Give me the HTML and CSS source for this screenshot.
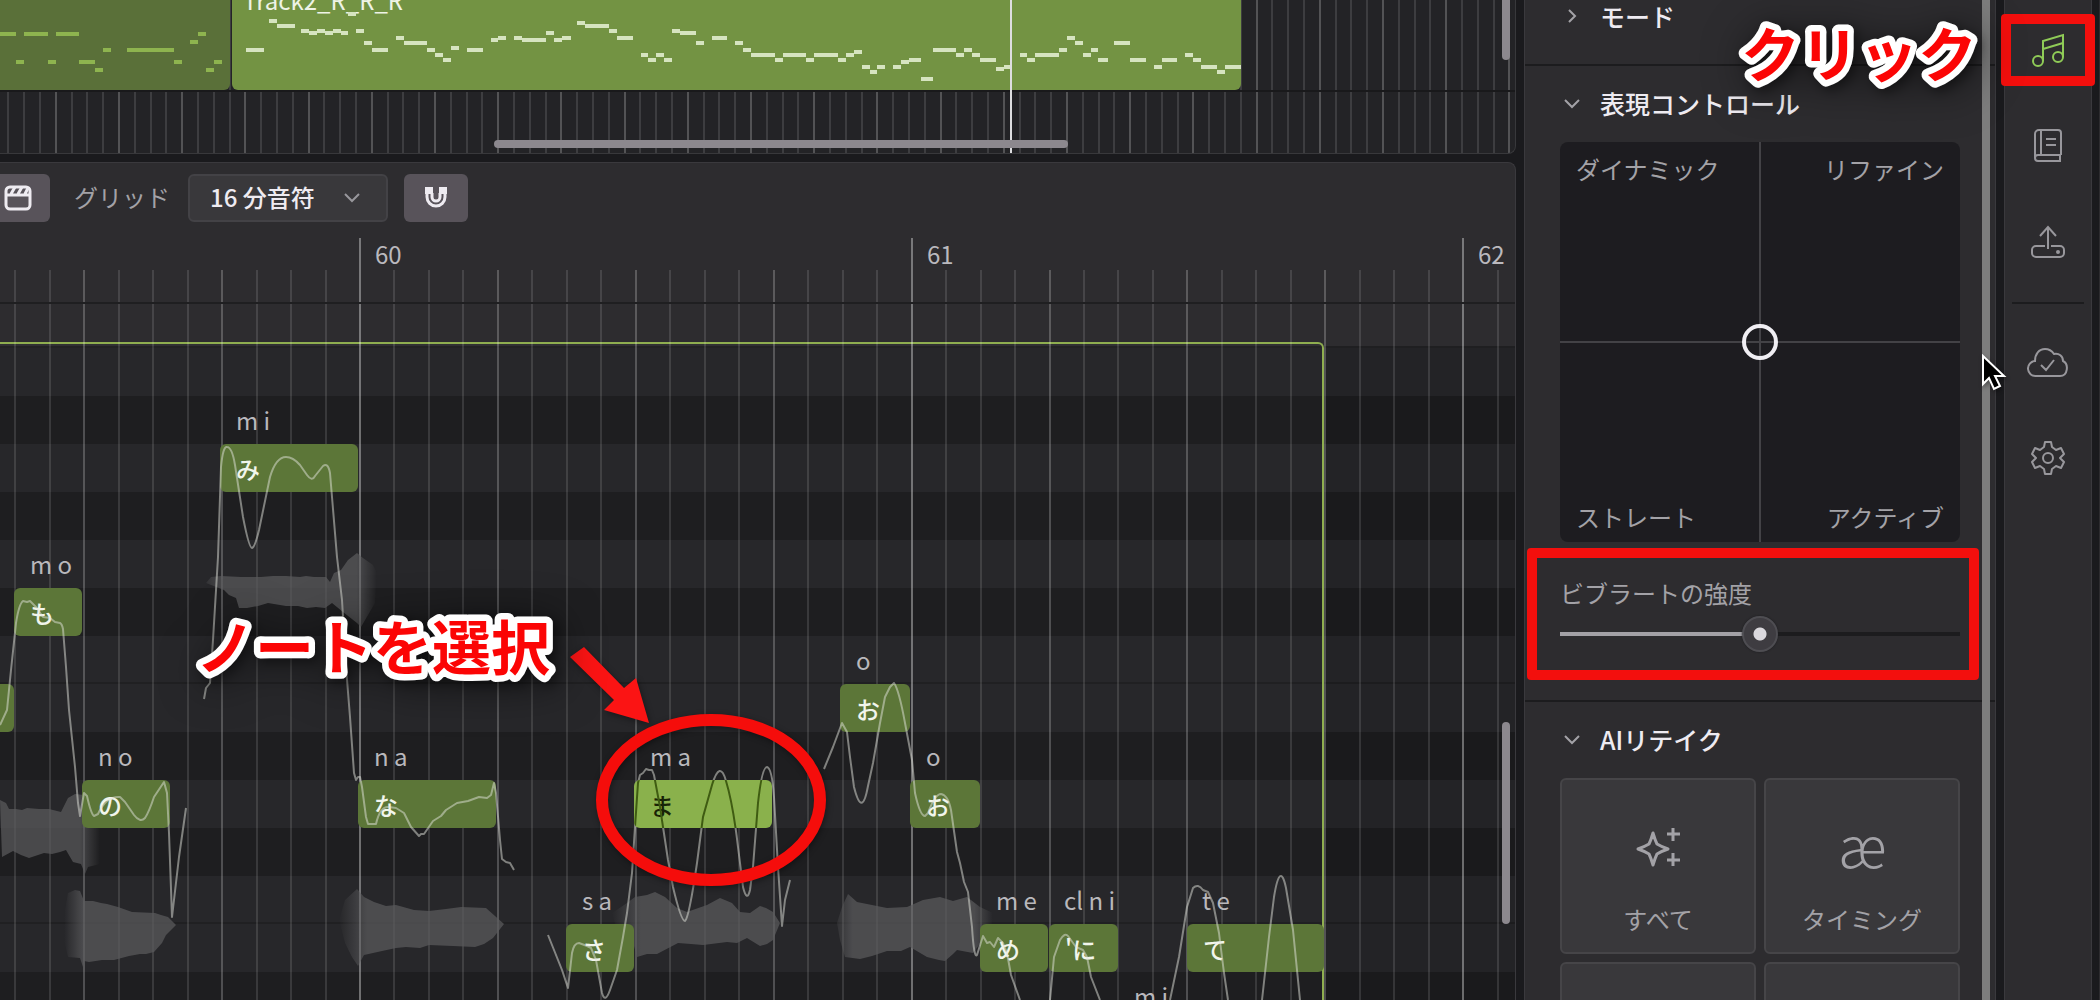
FILE: index.html
```html
<!DOCTYPE html>
<html lang="ja">
<head>
    <meta charset="UTF-8">
    <title>Piano roll</title>
    <link rel="stylesheet" href="styles.css">
</head>
<body>
<div class="app">
    <main class="workspace">
        <section class="tracks">
            <svg id="trackGrid" class="grid-lines"></svg>
            <div class="lane-line"></div>
            <div class="clip clip-dim">
                <svg class="clip-notes" width="230" height="90">
                    <path d="M0 34h16M24 34h24M56 34h23M16 62h8M48 62h8M79 62h16M95 70h8M103 50h8M127 50h47M174 62h8M190 42h8M198 34h8M206 70h8M214 62h8"/>
                </svg>
            </div>
            <div class="clip clip-active">
                <span class="clip-title">Track2_R_R_R</span>
                <svg class="clip-notes" width="1009" height="90" viewBox="232 0 1009 90">
                    <path d="M246 50h18M269 21h8M277 26h18M301 31h8M309 33h8M317 31h8M325 33h8M333 31h8M341 33h7M348 14h8M356 31h8M364 43h8M372 50h16M396 38h8M404 43h23M427 50h8M435 55h8M443 60h8M451 48h8M467 50h16M491 40h7M498 38h8M514 38h8M522 40h24M546 33h8M554 40h8M562 38h9M577 23h8M585 26h24M609 31h8M617 38h16M641 55h7M648 60h8M656 55h8M664 60h8M672 31h8M680 33h16M696 43h8M712 38h15M735 43h8M743 50h8M751 55h24M775 60h8M783 55h23M806 60h8M814 55h24M838 60h8M846 55h8M854 52h8M862 67h8M870 72h7M877 67h8M893 67h8M901 62h8M909 60h12M921 79h12M933 50h23M956 55h8M964 50h8M972 55h8M980 60h16M996 69h8M1004 67h7M1020 55h7M1027 60h8M1035 55h24M1059 50h8M1067 38h8M1075 43h8M1083 55h8M1091 50h7M1098 60h10M1114 43h16M1130 60h16M1154 67h8M1162 60h15M1185 55h8M1193 60h8M1201 67h16M1217 72h8M1225 67h16"/>
                </svg>
            </div>
            <div class="playhead"></div>
            <div class="scroll-x"></div>
            <div class="scroll-y"></div>
        </section>

        <section class="editor">
            <div class="toolbar">
                <button class="tool-button tool-clip" aria-label="クリップ">
                    <svg width="28" height="28" viewBox="0 0 28 28" fill="none" stroke="currentColor" stroke-width="3">
                        <rect x="2" y="3" width="24" height="22" rx="4"/>
                        <path d="M2 11h24M7 10l4-7M14 10l4-7M21 10l3-6"/>
                    </svg>
                </button>
                <label class="tool-label" for="gridSize">グリッド</label>
                <div class="select-box">
                    <select id="gridSize">
                        <option>16 分音符</option>
                    </select>
                    <svg class="select-arrow" width="16" height="10" viewBox="0 0 16 10" fill="none" stroke="currentColor" stroke-width="2">
                        <path d="M1 1l7 7 7-7"/>
                    </svg>
                </div>
                <button class="tool-button" aria-label="スナップ">
                    <svg width="24" height="24" viewBox="0 0 24 24" fill="none" stroke="currentColor">
                        <path stroke-width="8" d="M5 1v7M19 1v7"/>
                        <path stroke-width="3" d="M3 1v10a9 9 0 0 0 18 0V1M8 7v4a4 4 0 0 0 8 0V7"/>
                    </svg>
                </button>
            </div>

            <div class="ruler">
                <svg id="rulerGrid" class="grid-lines"></svg>
                <span class="bar-number" style="left: 375px">60</span>
                <span class="bar-number" style="left: 927px">61</span>
                <span class="bar-number" style="left: 1478px">62</span>
            </div>

            <div class="roll">
                <div class="roll-strip"></div>
                <div class="row"></div>
                <div class="row black"></div>
                <div class="row"></div>
                <div class="row black"></div>
                <div class="row"></div>
                <div class="row black"></div>
                <div class="row split"></div>
                <div class="row"></div>
                <div class="row black"></div>
                <div class="row"></div>
                <div class="row black"></div>
                <div class="row split"></div>
                <div class="row"></div>
                <div class="row black"></div>
                <div class="region"></div>

                <!-- rendered audio of each phrase -->
                <svg class="layer waves" width="1516" height="696" viewBox="0 304 1516 696">
                    <defs>
                        <linearGradient id="fadeOut"><stop offset=".8" stop-color="#5c5c5e"/><stop offset="1" stop-color="#5c5c5e" stop-opacity="0"/></linearGradient>
                        <linearGradient id="fadeIn"><stop offset="0" stop-color="#5c5c5e" stop-opacity="0"/><stop offset=".17" stop-color="#5c5c5e"/></linearGradient>
                        <linearGradient id="fadeBoth"><stop offset="0" stop-color="#5c5c5e" stop-opacity=".3"/><stop offset=".1" stop-color="#5c5c5e"/><stop offset=".88" stop-color="#5c5c5e"/><stop offset="1" stop-color="#5c5c5e" stop-opacity="0"/></linearGradient>
                    </defs>
                    <path fill="url(#fadeOut)" d="M0 800l6 3 3 6 7 0 6 1 5-2 12 1 10 0 12 3 7-14 7-4 9 1 16 6v63l-12 3-3 7-4-10-8-2-7-12-6 2-8 2-8-1-15 5-8-3-8-4-11 6z"/>
                    <path fill="url(#fadeIn)" d="M64 915l4-22 7-3 5 1 4 10 9 0 8 2 6 1 11 3 14 5 23 1 6 2 7 2 8 8-10 10-4 8-8 9-8 2-6 0-11 2-15 4-12 0-13 2-5-1-1 6-3-9-12-1-4-17z"/>
                    <path fill="url(#fadeBoth)" d="M206 583l5-6 10-1 20 1 20 0 12-1 13 0 14 1 6-1 8 1 12 0 4 5 4-9 7-3 7-10 9-7 6 5 10 7 4 8-2 30-7 12-7 12-4-4-14-11-11-9-7 5-9-1-9 1-9-2-12 0-18-3-10 3-11 2-8 0-3-10-7-3-5-5z"/>
                    <path fill="url(#fadeIn)" d="M339 920l6-20 12-11 7 8 10 5 12 4 10-1 18 5 15 1 17-2 15-2 25 1 18 16-11 14-9 6-9 3-22-1-24-1-9 3-14-1-10 1-14 3-18 4-6 11-6-9-7-14z"/>
                    <path fill="url(#fadeIn)" d="M612 913l15-10 8-6 12-2 8-3 10 5 12 11 10 4 20-7 13-7 12 5 8 9 10 1 10-7 6 2 7 4 7 11-7 17-6 4-7 2-13-8-10 5-10-1-24 3-12-1-13-1-21 11-10 0-10 3-3-11-18-18z"/>
                    <path fill="url(#fadeBoth)" d="M837 923l5-16 6-13 9 8 20 4 10 2 20-1 16-7 17-3 13 4 14-4 13 10 13 6-1 15-19 25-16-3-4 4-8 7-6-1-12-3-17-10-9 4-14 0-15 5-12 3-15-2-5-17z"/>
                </svg>

                <div class="phoneme" style="left: 30px; top: 250px">m o</div>
                <div class="note" style="left: 14px; top: 284px; width: 68px">も</div>
                <div class="note" style="left: -54px; top: 380px; width: 68px"></div>
                <div class="phoneme" style="left: 98px; top: 442px">n o</div>
                <div class="note" style="left: 82px; top: 476px; width: 88px">の</div>
                <div class="phoneme" style="left: 236px; top: 106px">m i</div>
                <div class="note" style="left: 220px; top: 140px; width: 138px">み</div>
                <div class="phoneme" style="left: 374px; top: 442px">n a</div>
                <div class="note" style="left: 358px; top: 476px; width: 138px">な</div>
                <div class="phoneme" style="left: 582px; top: 586px">s a</div>
                <div class="note" style="left: 566px; top: 620px; width: 68px">さ</div>
                <div class="phoneme" style="left: 650px; top: 442px">m a</div>
                <div class="phoneme" style="left: 856px; top: 346px">o</div>
                <div class="note" style="left: 840px; top: 380px; width: 70px">お</div>
                <div class="phoneme" style="left: 926px; top: 442px">o</div>
                <div class="note" style="left: 910px; top: 476px; width: 70px">お</div>
                <div class="phoneme" style="left: 996px; top: 586px">m e</div>
                <div class="note" style="left: 980px; top: 620px; width: 68px">め</div>
                <div class="phoneme" style="left: 1064px; top: 586px">cl n i</div>
                <div class="note" style="left: 1049px; top: 620px; width: 69px">'に</div>
                <div class="phoneme" style="left: 1134px; top: 682px">m i</div>
                <div class="phoneme" style="left: 1202px; top: 586px">t e</div>
                <div class="note" style="left: 1187px; top: 620px; width: 137px">て</div>

                <!-- pitch curves -->
                <svg class="layer pitch" width="1516" height="696" viewBox="0 304 1516 696">
                    <path d="M0 725L7 710 11 670 16 623Q19 604 23 601L27 602 30 601 36 607 43 617 50 618 55 622 60 623Q62 624 63 629L66 667 69 710 75 767 78 803 80 816 84 793 87 796Q91 814 94 816L98 814Q106 796 120 797L125 802 134 815Q140 823 145 818 149 812 154 797L164 782 167 793 169 833 172 917 179 857 186 808"/>
                    <path d="M204 699L206 688 210 683 213 640 218 557 221 467Q223 446 227 447 232 447 235 465L243 517Q249 548 252 548 255 547 259 530L270 477Q276 457 286 457 293 457 300 465L307 475Q312 482 315 476L323 466Q328 462 330 473L337 557 342 600 346 667 350 717 354 773 356 780 358 777 360 777 362 787 366 817 368 824 376 824Q380 806 389 807L396 808 404 813 411 827 419 836 421 834 424 834 433 821 441 816 446 810 457 803 468 801 479 797 487 798 491 795 494 783 496 793 500 840 502 859 506 862 510 863 514 870"/>
                    <path d="M548 935L562 970 568 988 572 953Q574 943 579 943L587 946 591 948 596 960 602 993Q605 1004 610 990L617 970 623 937 627 913 632 873 635 827 638 783 640 775 643 773 646 769 649 770 652 770 654 775 660 807 668 860 673 887Q681 921 685 921 689 918 697 863L703 817 712 785Q720 759 726 781 733 804 738 847L743 887Q747 903 750 890L753 867 758 803Q762 767 767 767 772 768 774 797L778 867 782 926 785 900 790 880"/>
                    <path d="M824 769L833 747 842 723 847 732 850 757 854 787Q862 819 868 786L873 763 880 723 885 697 890 687 894 683Q899 690 905 723L912 760 915 793Q920 816 925 816L928 813Q935 794 941 794 948 795 951 810L957 852 960 863 964 882 968 892 972 927Q974 959 977 955L983 936 987 943 990 942 994 947 998 938 1003 943 1007 953 1011 975 1020 1000"/>
                    <path d="M1050 1000L1054 957 1060 940Q1065 932 1068 936L1076 947 1083 950 1087 957 1091 977 1100 1000M1170 1000L1179 957 1187 907 1193 888Q1198 883 1203 890L1208 892 1213 903 1219 933 1224 973 1228 1000M1262 1000L1269 937 1274 897Q1280 860 1286 888L1293 930 1300 1000"/>
                </svg>

                <div class="note selected" style="left: 634px; top: 476px; width: 138px">
                    <svg class="note-pitch" width="138" height="48" viewBox="634 780 138 48">
                        <path d="M632 873L635 827 638 783 640 775M654 775L660 807 668 860M697 863L703 817 712 785Q720 759 726 781 733 804 738 847M753 867L758 803Q762 767 767 767 772 768 774 797"/>
                    </svg>
                    <span>ま</span>
                </div>

                <svg class="layer marks" width="1516" height="696" viewBox="0 304 1516 696">
                    <path fill="#fb1414" d="M570 657L584 647 624 688 636 678 649 723 604 710 614 700z"/>
                    <ellipse cx="711" cy="800" rx="109" ry="80" fill="none" stroke="#f50d0b" stroke-width="12"/>
                </svg>
                <svg class="caption caption-note" width="400" height="100">
                    <text x="16" y="66">ノートを選択</text>
                </svg>
                <div class="scroll-y scroll-roll"></div>
            </div>
        </section>
    </main>

    <aside class="inspector">
        <section class="group group-mode">
            <h2>
                <svg width="16" height="16" viewBox="0 0 16 16" fill="none" stroke="currentColor" stroke-width="2"><path d="M5 2l6 6-6 6"/></svg>
                モード
            </h2>
        </section>
        <section class="group group-control">
            <h2>
                <svg width="16" height="16" viewBox="0 0 16 16" fill="none" stroke="currentColor" stroke-width="2"><path d="M1 5l7 7 7-7"/></svg>
                表現コントロール
            </h2>
            <div class="pad">
                <span>ダイナミック</span>
                <span>リファイン</span>
                <span>ストレート</span>
                <span>アクティブ</span>
                <button class="pad-handle" aria-label="表現"></button>
            </div>
            <div class="vibrato">
                <label for="vibrato">ビブラートの強度</label>
                <input id="vibrato" type="range" min="0" max="100" value="50">
                <div class="red-box"></div>
            </div>
        </section>
        <section class="group group-retake">
            <h2>
                <svg width="16" height="16" viewBox="0 0 16 16" fill="none" stroke="currentColor" stroke-width="2"><path d="M1 5l7 7 7-7"/></svg>
                AIリテイク
            </h2>
            <div class="cards">
                <button class="card">
                    <svg width="46" height="46" viewBox="0 0 46 46" fill="none" stroke="currentColor" stroke-width="3">
                        <path stroke-linejoin="round" d="M18 7q2 7 4 11 5 3 11 5-6 2-11 5-2 4-4 11-2-7-4-11-5-3-11-5 6-2 11-5 2-4 4-11z"/>
                        <path d="M38 2v13M32 8h13M38 27v13M32 34h13"/>
                    </svg>
                    <span>すべて</span>
                </button>
                <button class="card">
                    <span class="glyph">æ</span>
                    <span>タイミング</span>
                </button>
                <button class="card" aria-label="ピッチ"></button>
                <button class="card" aria-label="音色"></button>
            </div>
        </section>
        <div class="inspector-scroll"></div>
    </aside>

    <nav class="sidebar">
        <button class="side-button active" aria-label="ノート">
            <svg width="36" height="36" viewBox="0 0 36 36">
                <circle cx="8" cy="29" r="5"/><circle cx="28" cy="25" r="5"/>
                <path d="M13 29V9l20-6v22M13 17l20-6"/>
            </svg>
            <div class="red-box"></div>
        </button>
        <button class="side-button" aria-label="辞書">
            <svg width="36" height="36" viewBox="0 0 36 36">
                <path d="M31 27H8a3 3 0 0 0 0 6h23M30 27v6M5 30V6a4 4 0 0 1 4-4h19a3 3 0 0 1 3 3v22M11 2v25M16 11h10M16 17h10"/>
            </svg>
        </button>
        <button class="side-button" aria-label="書き出し">
            <svg width="36" height="36" viewBox="0 0 36 36">
                <path d="M18 25V3M10 12l8-9 8 9M15 22H6a4 4 0 0 0-4 4v3a4 4 0 0 0 4 4h24a4 4 0 0 0 4-4v-3a4 4 0 0 0-4-4h-9"/>
                <circle class="dot" cx="28" cy="28" r="1"/>
            </svg>
        </button>
        <div class="side-line"></div>
        <button class="side-button" aria-label="クラウド">
            <svg width="42" height="36" viewBox="0 0 42 36">
                <path d="M9 32a7 7 0 0 1-1-15C8 10 12 5 18 5c4 0 7 2 9 5 5-1 9 2 9 7 6 3 5 15-3 15zM14 21l5 5 8-10"/>
            </svg>
        </button>
        <button class="side-button" aria-label="設定">
            <svg width="36" height="36" viewBox="0 0 36 36">
                <circle cx="18" cy="18" r="5"/>
                <path stroke-linejoin="round" d="M15 2h6l1 5 4 3 5-2 3 6-4 4 4 4-3 6-5-2-4 3-1 5h-6l-1-5-4-3-5 2-3-6 4-4-4-4 3-6 5 2 4-3z"/>
            </svg>
        </button>
    </nav>

    <svg class="caption caption-click" width="260" height="110">
        <text x="11" y="77">クリック</text>
    </svg>
    <svg class="cursor" width="26" height="38" viewBox="0 0 26 38">
        <path fill="#000" stroke="#fff" stroke-width="2" d="M2 2v28l6-6 5 11 6-3-5-10h9z"/>
    </svg>
</div>
<script src="script.js"></script>
</body>
</html>
```
FILE: styles.css
```css
* {
    box-sizing: border-box;
}

body {
    margin: 0;
    background-color: #1a1a1d;
    color: #a3a2a7;
    font-family: "Noto Sans CJK JP", "Noto Sans", sans-serif;
    font-size: 24px;
    line-height: 36px;
}

button, select {
    font: inherit;
    color: inherit;
    border: none;
    padding: 0;
}

.app {
    position: relative;
    display: grid;
    grid-template-columns: minmax(0, 1fr) 472px 88px;
    column-gap: 8px;
    height: 100vh;
    padding-right: 7px;
    border-right: 1px solid #2d2c2f;
    overflow: hidden;
}

/* left side: tracks and piano roll */
.workspace {
    display: flex;
    flex-direction: column;
    gap: 8px;
    min-width: 0;
    min-height: 0;
}

.tracks {
    position: relative;
    height: 154px;
    background-color: #232326;
    border-bottom: 1px solid #38383b;
    border-right: 1px solid #38383b;
    border-radius: 0 0 8px 0;
    overflow: hidden;
}

.grid-lines {
    position: absolute;
    left: 0;
    top: 0;
    width: 100%;
    height: 100%;
}

.grid-lines path {
    fill: none;
    stroke-width: 2px;
}

.grid-lines .minor {
    stroke: rgba(255, 255, 255, 0.12);
}

.grid-lines .beat {
    stroke: rgba(255, 255, 255, 0.22);
}

.grid-lines .bar {
    stroke: rgba(255, 255, 255, 0.36);
}

.lane-line {
    position: absolute;
    left: 0;
    right: 0;
    top: 90px;
    height: 2px;
    background-color: #19191b;
}

.clip {
    position: absolute;
    top: 0;
    height: 90px;
    overflow: hidden;
}

.clip-dim {
    left: 0;
    width: 230px;
    background-color: #5a7039;
    border-radius: 0 0 6px 0;
}

.clip-active {
    left: 232px;
    width: 1009px;
    background-color: #739343;
    border-radius: 0 0 6px 6px;
}

.clip-notes {
    position: absolute;
    left: 0;
    top: 0;
    fill: none;
    stroke: #8eb44f;
    stroke-width: 4px;
}

.clip-active .clip-notes {
    stroke: #d6e4c0;
}

.clip-title {
    position: absolute;
    left: 11px;
    top: -18px;
    color: #eef3e6;
}

.playhead {
    position: absolute;
    left: 1010px;
    top: 0;
    width: 2px;
    height: 100%;
    background-color: #dddde0;
}

.scroll-x {
    position: absolute;
    left: 494px;
    top: 140px;
    width: 574px;
    height: 8px;
    border-radius: 4px;
    background-color: #8c888e;
}

.scroll-y {
    position: absolute;
    right: 5px;
    top: -8px;
    width: 8px;
    height: 68px;
    border-radius: 4px;
    background-color: #8c888e;
}

.editor {
    flex: 1;
    display: flex;
    flex-direction: column;
    min-height: 0;
    background-color: #2d2c2f;
    border-top: 1px solid #3a393d;
    border-right: 1px solid #3a393d;
    border-radius: 0 8px 0 0;
    overflow: hidden;
}

.toolbar {
    display: flex;
    align-items: center;
    height: 75px;
    padding-bottom: 5px;
}

.tool-button {
    display: flex;
    align-items: center;
    justify-content: center;
    width: 64px;
    height: 48px;
    border-radius: 6px;
    background-color: #58535a;
    color: #eeebf1;
    cursor: pointer;
}

.tool-clip {
    width: 50px;
    padding-right: 14px;
    border-radius: 0 6px 6px 0;
}

.tool-label {
    margin: 0 18px 0 24px;
    padding-bottom: 2px;
}

.select-box {
    position: relative;
    width: 200px;
    margin-right: 16px;
}

.select-box select {
    display: block;
    width: 100%;
    height: 48px;
    padding: 0 48px 2px 20px;
    appearance: none;
    -webkit-appearance: none;
    border: 2px solid #434246;
    border-radius: 6px;
    background-color: #39383b;
    color: #eeebf1;
    font-weight: 500;
}

.select-arrow {
    position: absolute;
    right: 28px;
    top: 19px;
    color: #98979c;
    pointer-events: none;
}

.ruler {
    position: relative;
    height: 66px;
    border-bottom: 2px solid #1f1f21;
}

.bar-number {
    position: absolute;
    top: -2px;
    color: #bab9be;
}

.roll {
    position: relative;
    flex: 1;
    min-height: 0;
    overflow: hidden;
}

.roll-strip {
    height: 44px;
    border-bottom: 2px solid #1f1f21;
}

.row {
    height: 48px;
    background-color: #232326;
}

.row.black {
    background-color: #1a1a1c;
}

.row.split {
    border-bottom: 2px solid #1c1c1e;
}

.region {
    position: absolute;
    left: 0;
    top: 38px;
    bottom: 0;
    width: 1324px;
    border-top: 2px solid #8fae50;
    border-right: 2px solid #8fae50;
    border-radius: 0 6px 0 0;
    background-color: rgba(255, 255, 255, 0.02);
}

.layer {
    position: absolute;
    left: 0;
    top: 0;
    pointer-events: none;
}

.waves {
    opacity: 0.7;
}

.pitch {
    fill: none;
    stroke: rgba(225, 228, 220, 0.5);
    stroke-width: 2px;
    stroke-linejoin: round;
}

.marks {
    filter: drop-shadow(1px 2px 3px rgba(0, 0, 0, 0.4));
}

.note {
    position: absolute;
    height: 48px;
    padding-left: 16px;
    border-radius: 6px;
    background-color: #5c7638;
    color: #f1f5ec;
    font-weight: 500;
    line-height: 50px;
    overflow: hidden;
}

.note.selected {
    background-color: #8ab14c;
    color: #182206;
}

.note-pitch {
    position: absolute;
    left: 0;
    top: 0;
    fill: none;
    stroke: #3f5c12;
    stroke-width: 2px;
}

.phoneme {
    position: absolute;
    line-height: 20px;
    color: #b9b8bc;
    white-space: nowrap;
}

.scroll-roll {
    top: 418px;
    height: 202px;
}

/* inspector */
.inspector {
    position: relative;
    background-color: #2d2c2f;
    border-left: 1px solid #3a393d;
    border-right: 1px solid #3a393d;
    overflow: hidden;
}

.group {
    padding: 0 35px;
    border-bottom: 2px solid #1c1c1e;
}

.group h2 {
    display: flex;
    align-items: center;
    gap: 20px;
    margin: 0;
    padding-left: 4px;
    color: #eeebf1;
    font-size: 25px;
    font-weight: 500;
    line-height: 36px;
}

.group h2 svg {
    color: #a3a2a7;
}

.group-mode {
    height: 66px;
}

.group-mode h2 {
    line-height: 32px;
}

.group-control {
    height: 636px;
    padding-top: 19px;
}

.group-retake {
    padding-top: 19px;
    border-bottom: none;
}

.pad {
    position: relative;
    display: grid;
    grid-template-columns: 1fr 1fr;
    align-content: space-between;
    height: 400px;
    margin-top: 21px;
    padding: 9px 16px 7px;
    border-radius: 8px;
    background: linear-gradient(#434246, #434246) 50% 0 / 2px 100% no-repeat, linear-gradient(#434246, #434246) 0 50% / 100% 2px no-repeat, #1d1c20;
}

.pad span:nth-child(even) {
    text-align: right;
}

.pad-handle {
    position: absolute;
    left: calc(50% - 18px);
    top: calc(50% - 18px);
    width: 36px;
    height: 36px;
    border: 4px solid #f0eef3;
    border-radius: 50%;
    background-color: transparent;
}

.vibrato {
    position: relative;
    margin: 0 -33px;
    padding: 33px 33px;
}

.vibrato label {
    display: block;
}

.vibrato input {
    display: block;
    width: 100%;
    height: 36px;
    margin: 5px 0 0;
    appearance: none;
    -webkit-appearance: none;
    background: linear-gradient(90deg, #a3a1a6 50%, #1c1c1e 50%) 0 50% / 100% 4px no-repeat;
}

.vibrato input::-webkit-slider-thumb {
    -webkit-appearance: none;
    width: 36px;
    height: 36px;
    border: 2px solid #4e4d52;
    border-radius: 50%;
    background: radial-gradient(circle, #dad8dd 6px, #3e3c41 7px);
    box-shadow: 0 0 2px #1a1a1d;
}

.red-box {
    position: absolute;
    border: 10px solid #f30f0d;
    border-radius: 4px;
    pointer-events: none;
}

.vibrato .red-box {
    left: 0;
    right: 14px;
    top: 6px;
    height: 132px;
}

.cards {
    display: grid;
    grid-template-columns: 1fr 1fr;
    gap: 8px;
    margin-top: 21px;
}

.card {
    display: flex;
    flex-direction: column;
    align-items: center;
    justify-content: space-between;
    height: 176px;
    padding: 46px 0 15px;
    border: 2px solid #464548;
    border-radius: 6px;
    background-color: #39383b;
}

.card .glyph {
    font-size: 56px;
    font-weight: 300;
    line-height: 36px;
}

.inspector-scroll {
    position: absolute;
    right: 5px;
    top: 0;
    bottom: 0;
    width: 8px;
    background-color: #7d7d7d;
}

/* icon bar */
.sidebar {
    display: flex;
    flex-direction: column;
    align-items: center;
    padding-top: 14px;
    background-color: #2d2c2f;
    border-left: 1px solid #3a393d;
    border-right: 1px solid #3a393d;
}

.side-button {
    position: relative;
    display: flex;
    align-items: center;
    justify-content: center;
    width: 88px;
    height: 72px;
    margin-bottom: 24px;
    background-color: transparent;
    color: #98979c;
    cursor: pointer;
}

.side-button svg {
    fill: none;
    stroke: currentColor;
    stroke-width: 2px;
}

.side-button .dot {
    fill: currentColor;
}

.side-button.active {
    color: #8fcb57;
}

.side-button .red-box {
    inset: 0 -3px;
}

.side-line {
    width: 72px;
    height: 2px;
    margin-bottom: 22px;
    background-color: #1c1c1e;
}

/* captions over the screen */
.caption {
    position: absolute;
    overflow: visible;
    pointer-events: none;
    filter: drop-shadow(4px 4px 6px rgba(0, 0, 0, 0.4)) drop-shadow(4px 4px 20px rgba(0, 0, 0, 0.5));
}

.caption text {
    fill: #fb0505;
    stroke: #ffffff;
    stroke-width: 13px;
    stroke-linejoin: round;
    paint-order: stroke;
    font-size: 59px;
    font-weight: 700;
}

.caption-note {
    left: 180px;
    top: 300px;
}

.caption-click {
    right: 109px;
    top: 0;
}

.cursor {
    position: absolute;
    right: 92px;
    top: 354px;
    filter: drop-shadow(1px 2px 2px rgba(0, 0, 0, 0.4));
}
```
FILE: script.js
```js
// draw the vertical grid lines: every 4th is a beat, every 16th a bar
function drawGrid(id, start, step, tops, withBars) {
    let svg = document.getElementById(id);
    let width = svg.getBoundingClientRect().width;
    let paths = {minor: '', beat: '', bar: ''};
    for (let i = 0; start + i * step < width; i++) {
        let x = Math.round(start + i * step);
        let kind = i % 4 ? 'minor' : 'beat';
        if (withBars && i % 16 === 0) {
            kind = 'bar';
        }
        paths[kind] += 'M' + x + ' ' + tops[kind] + 'V2000';
    }
    for (let kind in paths) {
        let path = document.createElementNS('http://www.w3.org/2000/svg', 'path');
        path.setAttribute('class', kind);
        path.setAttribute('d', paths[kind]);
        svg.appendChild(path);
    }
}

let roll = document.querySelector('.roll');
let rollGrid = document.createElementNS('http://www.w3.org/2000/svg', 'svg');
rollGrid.id = 'rollGrid';
rollGrid.setAttribute('class', 'grid-lines');
roll.insertBefore(rollGrid, document.querySelector('.waves'));

drawGrid('trackGrid', -7.4, 15.8, {minor: 0, beat: 0, bar: 0}, false);
drawGrid('rulerGrid', -191.6, 34.475, {minor: 32, beat: 32, bar: 0}, true);
drawGrid('rollGrid', -191.6, 34.475, {minor: 0, beat: 0, bar: 0}, true);
```
